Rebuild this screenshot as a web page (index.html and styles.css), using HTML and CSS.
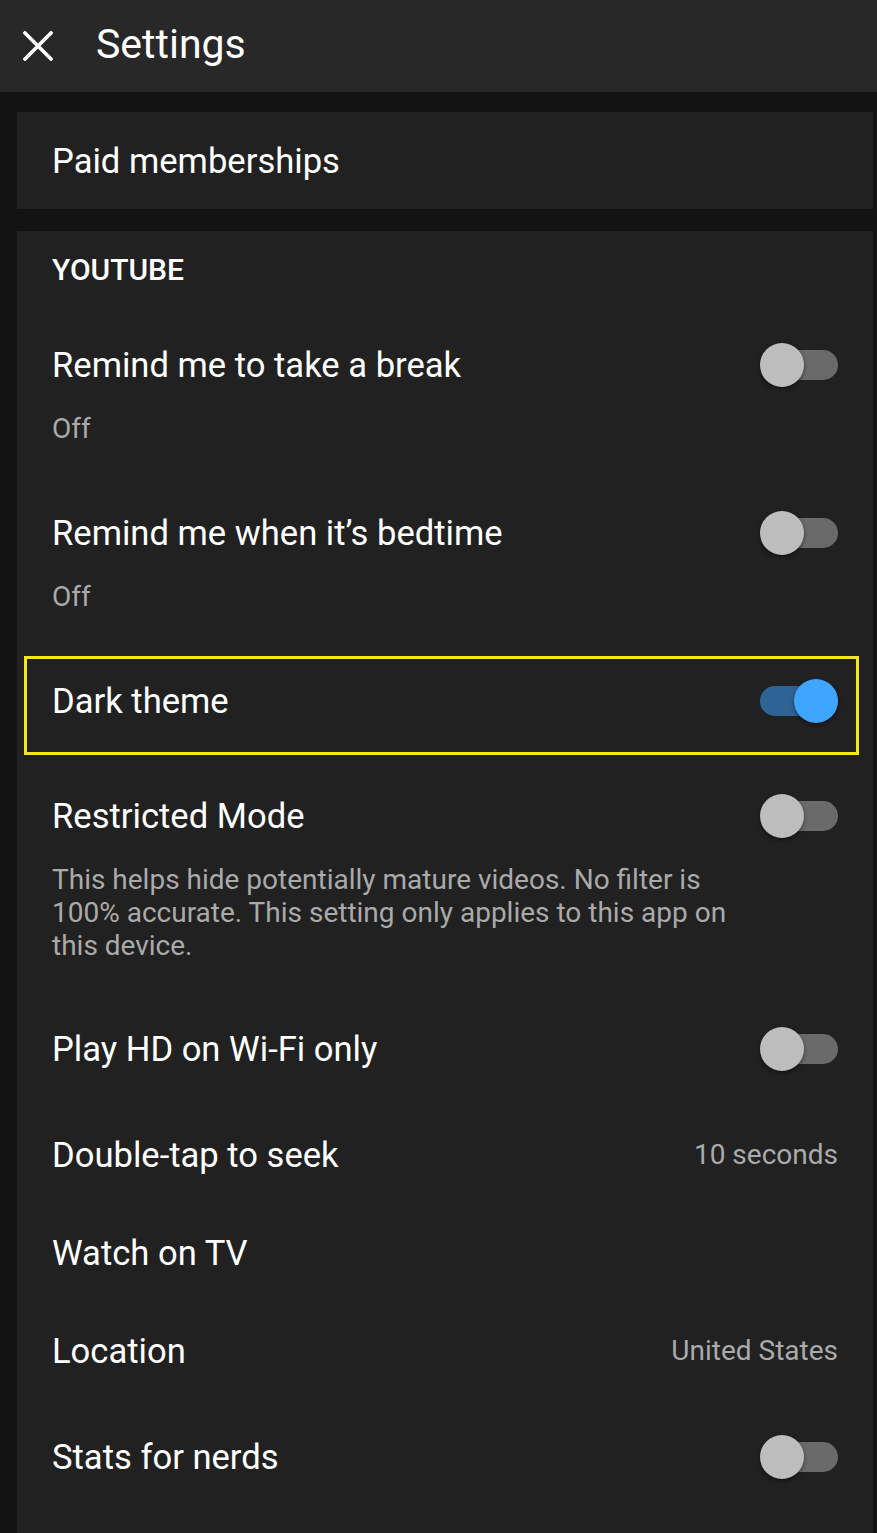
FILE: index.html
```html
<!DOCTYPE html>
<html lang="en">
<head>
<meta charset="utf-8">
<title>Settings</title>
<link rel="stylesheet" href="styles.css">
</head>
<body>
<header class="appbar">
  <svg class="close" viewBox="0 0 30 30" width="30" height="30" aria-hidden="true">
    <path d="M2 2 L28 28 M28 2 L2 28" stroke="#fff" stroke-width="3.6" stroke-linecap="square" fill="none"/>
  </svg>
  <h1 class="appbar-title">Settings</h1>
</header>
<main class="content">
  <section class="card card-single">
    <div class="title">Paid memberships</div>
  </section>
  <section class="card">
    <div class="section-head">YOUTUBE</div>

    <div class="row">
      <div class="row-main">
        <span class="title">Remind me to take a break</span>
        <span class="switch"><span class="track"></span><span class="thumb"></span></span>
      </div>
      <div class="sub">Off</div>
    </div>

    <div class="row">
      <div class="row-main">
        <span class="title">Remind me when it’s bedtime</span>
        <span class="switch"><span class="track"></span><span class="thumb"></span></span>
      </div>
      <div class="sub">Off</div>
    </div>

    <div class="row row-highlight">
      <div class="row-main">
        <span class="title">Dark theme</span>
        <span class="switch switch-on"><span class="track"></span><span class="thumb"></span></span>
      </div>
    </div>

    <div class="row">
      <div class="row-main">
        <span class="title">Restricted Mode</span>
        <span class="switch"><span class="track"></span><span class="thumb"></span></span>
      </div>
      <div class="sub desc">This helps hide potentially mature videos. No filter is 100% accurate. This setting only applies to this app on this device.</div>
    </div>

    <div class="row">
      <div class="row-main">
        <span class="title">Play HD on Wi-Fi only</span>
        <span class="switch"><span class="track"></span><span class="thumb"></span></span>
      </div>
    </div>

    <div class="row">
      <div class="row-main">
        <span class="title">Double-tap to seek</span>
        <span class="value">10 seconds</span>
      </div>
    </div>

    <div class="row">
      <div class="row-main">
        <span class="title">Watch on TV</span>
      </div>
    </div>

    <div class="row">
      <div class="row-main">
        <span class="title">Location</span>
        <span class="value">United States</span>
      </div>
    </div>

    <div class="row">
      <div class="row-main">
        <span class="title">Stats for nerds</span>
        <span class="switch"><span class="track"></span><span class="thumb"></span></span>
      </div>
    </div>
  </section>
</main>
</body>
</html>
```
FILE: styles.css
```css
* { box-sizing: border-box; }
html, body {
  margin: 0;
  padding: 0;
  background: #131313;
  font-family: Roboto, "Noto Sans", "Liberation Sans", sans-serif;
  color: #ffffff;
  overflow: hidden;
}
.appbar {
  height: 92px;
  background: #282828;
  display: flex;
  align-items: center;
  padding-left: 23px;
}
.close {
  display: block;
  flex: none;
  margin-top: -1px;
}
.appbar-title {
  margin: -5px 0 0 43px;
  font-size: 41px;
  font-weight: 400;
  line-height: 48px;
  color: #ffffff;
}
.content {
  padding: 20px 4px 0 17px;
  display: flex;
  flex-direction: column;
  gap: 22px;
}
.card {
  background: #212121;
  padding-bottom: 40px;
}
.card-single {
  padding: 25px 35px 24px;
}
.title {
  font-size: 34.6px;
  line-height: 48px;
  color: #ffffff;
  white-space: nowrap;
}
.section-head {
  padding: 19px 35px 18px;
  font-size: 30px;
  font-weight: 500;
  line-height: 40px;
  color: #ffffff;
}
.row {
  padding: 25px 35px;
}
.row-main {
  display: flex;
  align-items: center;
  justify-content: space-between;
  min-height: 48px;
}
.sub {
  margin: 15px 0 5px;
  font-size: 28px;
  line-height: 34px;
  color: #aaaaaa;
}
.desc {
  line-height: 33px;
  max-width: 690px;
}
.value {
  font-size: 28px;
  line-height: 48px;
  color: #aaaaaa;
}
.row-highlight {
  margin: 12px 14px 4px 7px;
  padding: 10px 18px 19px 25px;
  border: 3px solid #f5e61d;
}
.switch {
  position: relative;
  flex: none;
  width: 78px;
  height: 64px;
}
.track {
  position: absolute;
  left: 4px;
  right: 0;
  top: 17px;
  height: 30px;
  border-radius: 15px;
  background: #6a6a6a;
}
.thumb {
  position: absolute;
  left: 0;
  top: 10px;
  width: 44px;
  height: 44px;
  border-radius: 50%;
  background: #bdbdbd;
  box-shadow: 0 2px 4px rgba(0, 0, 0, 0.45);
}
.switch-on .track {
  left: 0;
  right: 4px;
  background: #2e6396;
}
.switch-on .thumb {
  left: auto;
  right: 0;
  background: #3ea6ff;
}
```
